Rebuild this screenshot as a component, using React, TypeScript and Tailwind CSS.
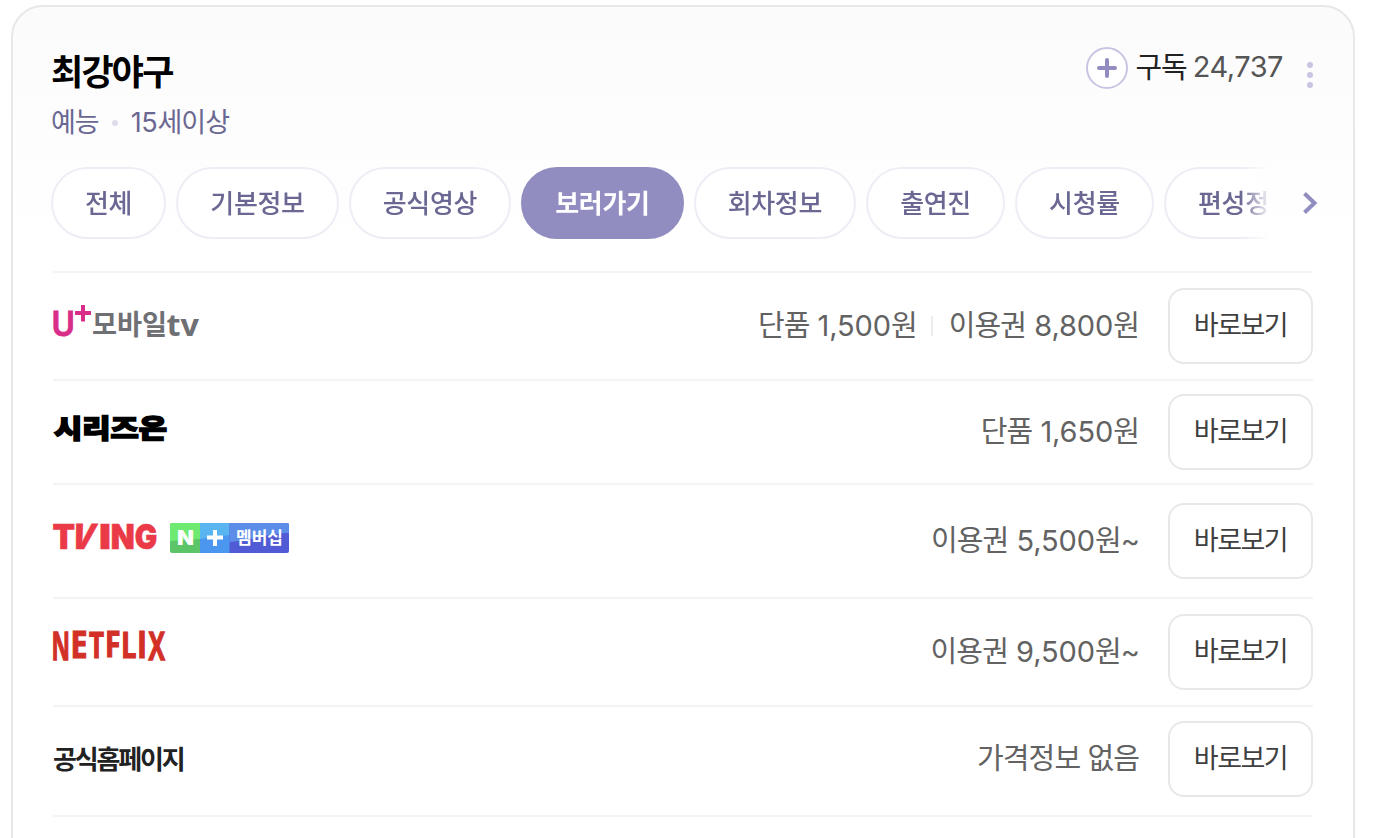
import { clsx } from 'clsx'
import type { ReactNode } from 'react'

const tabs = ['전체', '기본정보', '공식영상', '보러가기', '회차정보', '출연진', '시청률', '편성정보']

function UplusLogo() {
  return (
    <svg width="148" height="38" viewBox="0 0 148 38" role="img" className="mt-[15px] overflow-visible">
      <text x="-2" y="32.500" fill="#d92d8a" stroke="#d92d8a" strokeWidth="0.800" className="font-['Noto_Sans'] text-[34px] font-semibold" textLength="24.500" lengthAdjust="spacingAndGlyphs">
        U
      </text>
      <path d="M30 2v16.500M22 10h16" stroke="#d92d8a" strokeWidth="4" />
      <text x="39" y="31.500" fill="#6f7074" className="font-['Noto_Sans_CJK_KR'] text-[28px] font-bold" textLength="75" lengthAdjust="spacingAndGlyphs">
        모바일
      </text>
      <text x="113.500" y="32.500" fill="#6f7074" className="font-['Noto_Sans'] text-[30px] font-bold" textLength="32.500" lengthAdjust="spacingAndGlyphs">
        tv
      </text>
    </svg>
  )
}

function SeriesOnLogo() {
  return (
    <svg width="120" height="34" viewBox="0 0 120 34" role="img" className="mt-[16px] overflow-visible">
      <text x="1" y="27.500" fill="#000" stroke="#000" strokeWidth="1.600" className="font-['Noto_Sans_CJK_KR'] text-[26.500px] font-black" textLength="113" lengthAdjust="spacingAndGlyphs">
        시리즈온
      </text>
    </svg>
  )
}

function TvingLogo() {
  return (
    <div className="mt-[18px] flex items-start gap-[12px]">
      <svg width="105" height="32" viewBox="0 0 105 32" role="img" fill="#eb3a47" stroke="#eb3a47" strokeWidth="0.600" className="overflow-visible font-[Inter] text-[34.500px] font-black">
        <text x="-0.500" y="28" textLength="22.500" lengthAdjust="spacingAndGlyphs">T</text>
        <text transform="translate(15.5 28) skewX(-16)" textLength="23" lengthAdjust="spacingAndGlyphs">V</text>
        <text x="46" y="28" textLength="12" lengthAdjust="spacingAndGlyphs">I</text>
        <text x="57.700" y="28" textLength="24" lengthAdjust="spacingAndGlyphs">N</text>
        <text x="81.800" y="28" textLength="22.500" lengthAdjust="spacingAndGlyphs">G</text>
      </svg>
      <svg width="119" height="30" viewBox="0 0 119 30" role="img" className="mt-[2px] rounded-[2px]">
        <rect width="30" height="30" fill="#5cc568" />
        <path d="M0 0h30v16L0 18z" fill="#6eea72" />
        <rect x="30" width="30" height="30" fill="#4b97f0" />
        <path d="M30 0h30v12l-30 4z" fill="#58b5ef" />
        <rect x="59.500" width="59.500" height="30" fill="#515bd6" />
        <path d="M59.500 0H119v10c-21 0-39 8-59.500 9z" fill="#5c8de8" />
        <text x="7" y="21.500" fill="#fff" className="font-[Inter] text-[20px] font-black" textLength="17" lengthAdjust="spacingAndGlyphs">
          N
        </text>
        <path d="M45 7v16M37 14.500h16" stroke="#fff" strokeWidth="4" />
        <text x="66" y="20.500" fill="#fff" className="font-['Noto_Sans_CJK_KR'] text-[17px] font-bold" textLength="47" lengthAdjust="spacingAndGlyphs">
          멤버십
        </text>
      </svg>
    </div>
  )
}

const netflix = [
  { char: 'N', x: -1.5, width: 18.5, scale: 1.08 },
  { char: 'E', x: 17.5, width: 17, scale: 1.0 },
  { char: 'T', x: 36, width: 15, scale: 0.98 },
  { char: 'F', x: 52, width: 15.5, scale: 0.97 },
  { char: 'L', x: 68, width: 15.5, scale: 0.98 },
  { char: 'I', x: 84, width: 10, scale: 1.0 },
  { char: 'X', x: 95.5, width: 16.5, scale: 1.08 },
]

function NetflixLogo() {
  return (
    <svg width="114" height="34" viewBox="0 0 114 34" role="img" className="mt-[15px] overflow-visible">
      {netflix.map((l) => (
        <text
          key={l.char}
          fill="#d22f27"
          stroke="#d22f27"
          strokeWidth="1.200"
          className="font-['Open_Sans'] text-[37px] font-bold"
          textLength={l.width}
          lengthAdjust="spacingAndGlyphs"
          transform={`translate(${l.x} ${2.5 + 26.6 * l.scale}) scale(1 ${l.scale})`}
        >
          {l.char}
        </text>
      ))}
    </svg>
  )
}

type Provider = {
  name: string
  logo: ReactNode
  prices: { label: string; amount?: string; unit?: string }[]
  row: string
}

const providers: Provider[] = [
  {
    name: 'uplus',
    logo: <UplusLogo />,
    prices: [
      { label: '단품', amount: '1,500', unit: '원' },
      { label: '이용권', amount: '8,800', unit: '원' },
    ],
    row: 'h-[108px] pt-[15px]',
  },
  { name: 'serieson', logo: <SeriesOnLogo />, prices: [{ label: '단품', amount: '1,650', unit: '원' }], row: 'h-[104px] pt-[13px]' },
  { name: 'tving', logo: <TvingLogo />, prices: [{ label: '이용권', amount: '5,500', unit: '원~' }], row: 'h-[114px] pt-[18px]' },
  { name: 'netflix', logo: <NetflixLogo />, prices: [{ label: '이용권', amount: '9,500', unit: '원~' }], row: 'h-[108px] pt-[15px]' },
  {
    name: 'official',
    logo: <span className="mt-[20px] text-[26px] leading-[38px] font-bold tracking-[-2.150px] text-[#222]">공식홈페이지</span>,
    prices: [{ label: '가격정보 없음' }],
    row: 'h-[110px] pt-[14px]',
  },
]

function ProviderRow({ logo, prices, row }: Provider) {
  return (
    <li className={clsx('flex items-start border-t-2 border-[#f4f4f5]', row)}>
      {logo}
      <div className="mt-[19px] mr-[29px] ml-auto flex items-center">
        {prices.map((price, index) => (
          <div key={price.label} className="flex items-center">
            {index > 0 && <span className="mr-[16px] ml-[14px] h-5 w-[2px] bg-[#ebebed]" />}
            <span className="text-[29px] leading-[38px] tracking-[-0.900px] whitespace-nowrap text-[#626262]">
              {price.label}
              {price.amount && <span className="tracking-[-0.100px]"> {price.amount}</span>}
              {price.unit}
            </span>
          </div>
        ))}
      </div>
      <button className="h-[76px] w-[145px] rounded-2xl border-2 border-[#e8e8ea] bg-white text-[27px] tracking-[-1.500px] text-[#404040]">
        바로보기
      </button>
    </li>
  )
}

export default function App() {
  return (
    <div className="h-[838px] overflow-hidden bg-white pt-[5px] pl-[11px] font-[Inter,'Noto_Sans_CJK_KR',sans-serif]">
      <div className="h-[900px] w-[1344px] rounded-[32px] border-2 border-[#e8e8eb] bg-linear-to-b from-[#fbfbfc] to-white to-[240px] pl-[38px]">
        {/* Title and subscribe */}
        <header className="flex h-[160px] items-start">
          <div className="pt-[42px]">
            <h1 className="text-[35px] leading-[46px] font-bold tracking-[-1.800px] text-black">최강야구</h1>
            <div className="mt-[10px] flex items-center text-[27px] leading-[36px] tracking-[-1px] text-[#6a6792]">
              <span>예능</span>
              <span className="mr-[13px] ml-[13px] size-[6px] rounded-full bg-[#dddcea]" />
              <span>
                <span className="tracking-[-0.300px]">15</span>세이상
              </span>
            </div>
          </div>
          <div className="mt-[40px] mr-[38px] ml-auto flex items-start">
            <button className="flex items-center">
              <span className="flex size-[42px] items-center justify-center rounded-full border-2 border-[#c8c5e2] bg-white">
                <svg width="20" height="20" viewBox="0 0 20 20">
                  <path d="M10 2v16M2 10h16" stroke="#918dc0" strokeWidth="4" strokeLinecap="round" />
                </svg>
              </span>
              <span className="ml-[7px] text-[29px] leading-[38px] tracking-[-1px] text-[#222]">구독</span>
              <span className="ml-[6px] pb-[2px] text-[29px] leading-[38px] tracking-[-0.500px] text-[#555]">24,737</span>
            </button>
            <svg width="10" height="30" viewBox="0 0 10 30" className="mt-[13px] ml-[22px]">
              <circle cx="5" cy="5" r="3" fill="#c8c5e2" />
              <circle cx="5" cy="15" r="3" fill="#c8c5e2" />
              <circle cx="5" cy="25" r="3" fill="#c8c5e2" />
            </svg>
          </div>
        </header>

        {/* Tabs */}
        <nav className="flex h-[72px] items-center">
          <div className="flex w-[1217px] gap-[10.200px] overflow-hidden mask-r-from-[1190px] mask-r-to-[1220px]">
            {tabs.map((tab) => (
              <button
                key={tab}
                className={clsx(
                  'h-[72px] shrink-0 rounded-full border-2 px-[32px] text-[26px] tracking-[-0.350px]',
                  tab === '보러가기'
                    ? 'border-[#918dc0] bg-[#918dc0] font-bold text-white'
                    : 'border-[#eeedf5] bg-white font-medium text-[#6a6792]'
                )}
              >
                {tab}
              </button>
            ))}
          </div>
          <svg width="16" height="24" viewBox="0 0 16 24" className="ml-[34px]">
            <path d="M2.500 2.500L12.500 12l-10 9.500" fill="none" stroke="#918dc0" strokeWidth="4" />
          </svg>
        </nav>

        {/* Where to watch */}
        <ul className="mt-[32px] ml-[2px] w-[1260px] border-b-2 border-[#f4f4f5]">
          {providers.map((provider) => (
            <ProviderRow key={provider.name} {...provider} />
          ))}
        </ul>
      </div>
    </div>
  )
}
